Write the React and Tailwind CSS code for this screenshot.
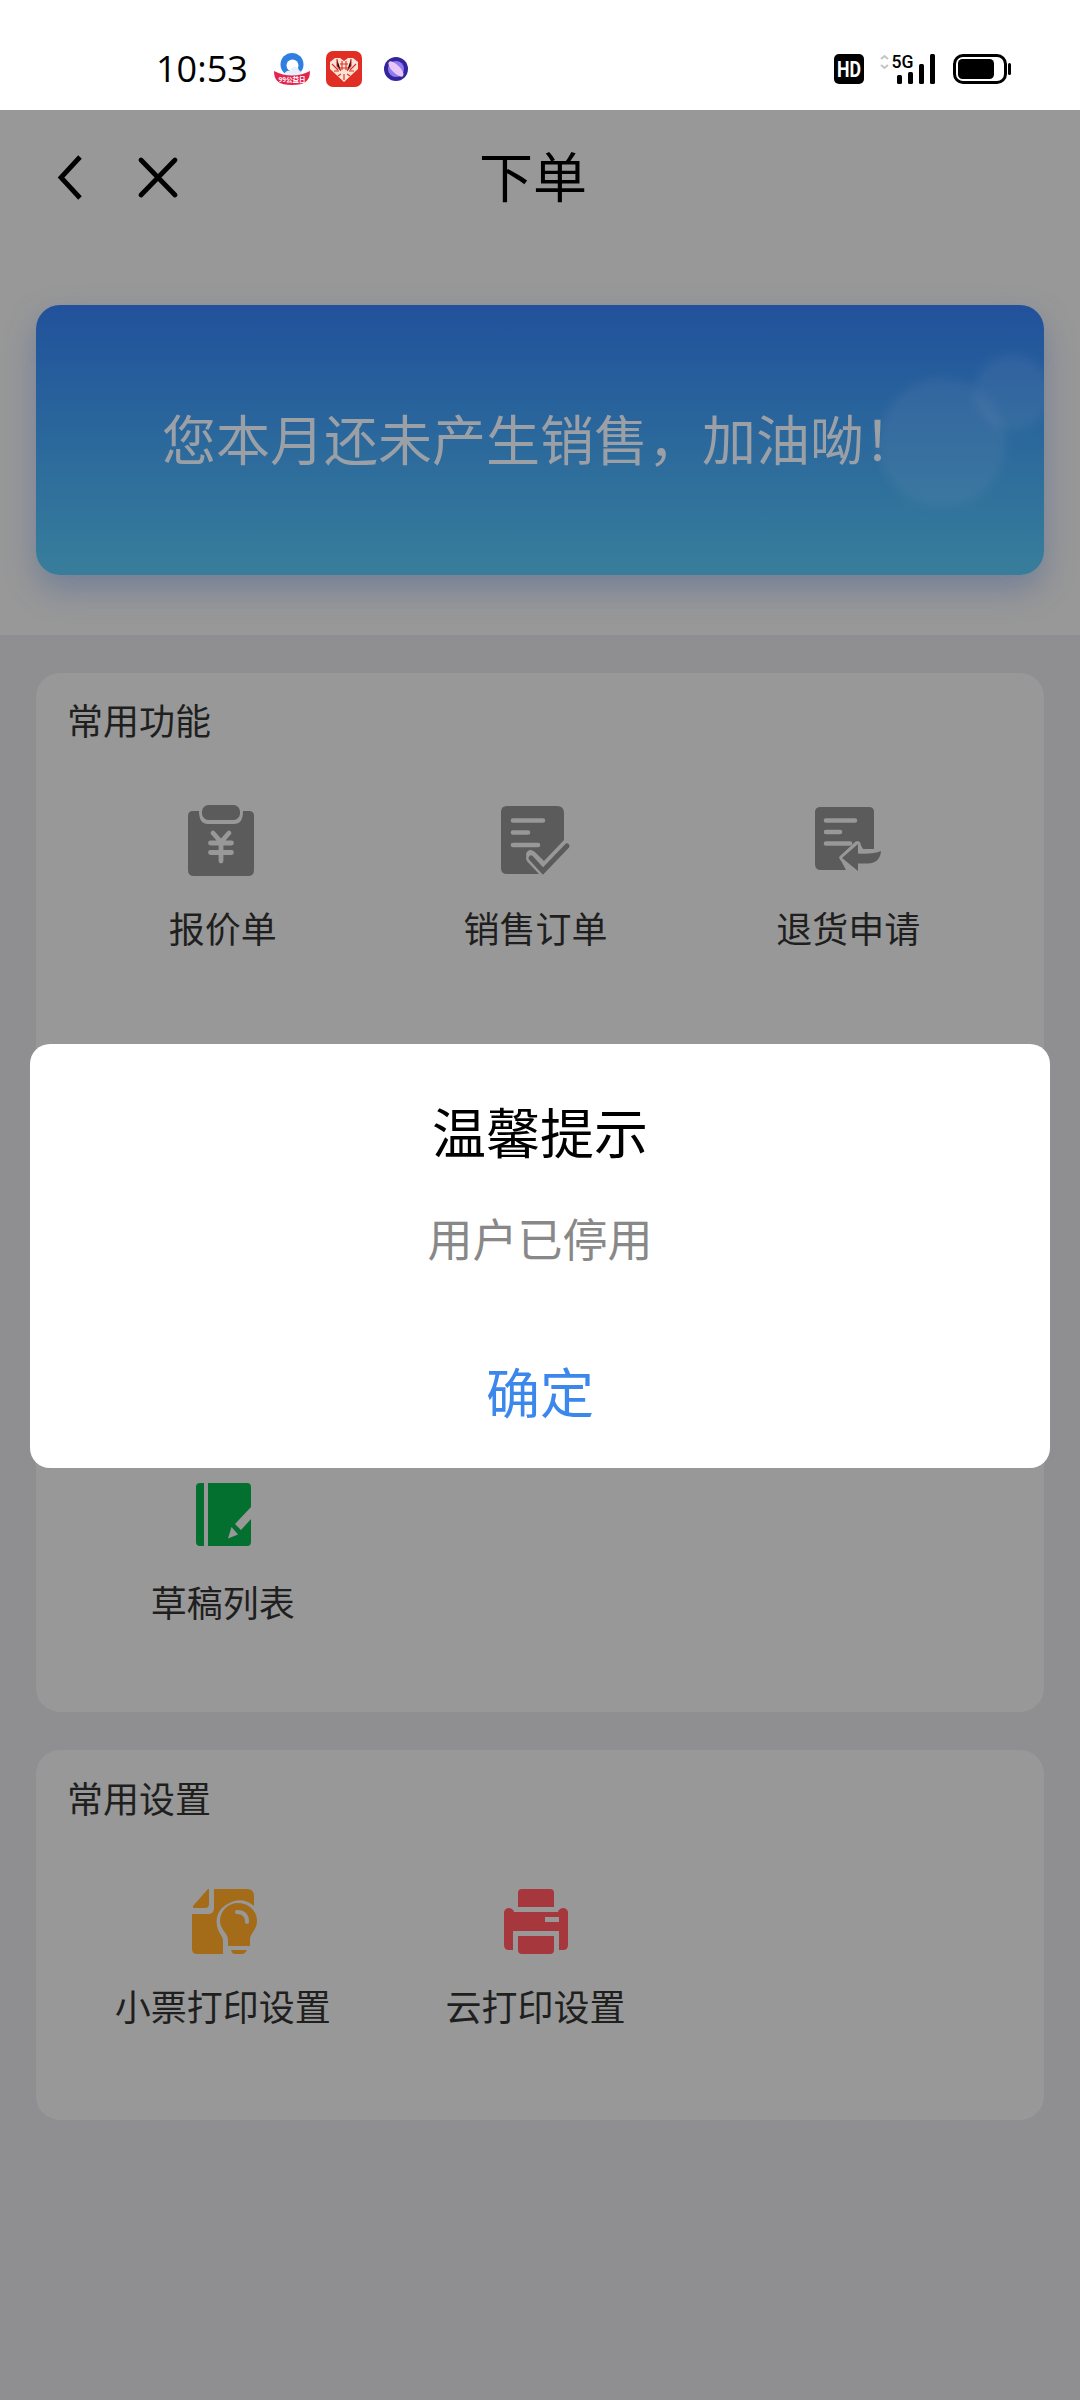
import React from "react";

const FONT = "font-['Roboto','Noto_Sans_CJK_SC',sans-serif]";

function StatusBar() {
    return (
        <div className="h-[110px] bg-white flex items-center pl-[156px] pr-[68px] pt-[27px]">
            <span className="w-[92px] text-[36px] leading-[50px] text-black font-['Open_Sans',sans-serif] whitespace-nowrap">10:53</span>

            {/* App notifications */}
            <svg className="w-9 h-8 ml-[26px]" viewBox="0 0 36 32">
                <circle cx="18" cy="11.5" r="11.5" fill="#2f7fe0" />
                <circle cx="18.500" cy="12.500" r="6" fill="#fff" />
                <path d="M10 24c-1-4 3-7 6-6 1-5 8-5 9-1l4 4-2 4z" fill="#e6f0fd" />
                <path d="M0 18q18 9 36 0c0 10-5 14-18 14S0 28 0 18z" fill="#e3264f" />
                <text x="18" y="29" textAnchor="middle" fontSize="6.500" fontWeight="700" fill="#fff">99公益日</text>
            </svg>
            <svg className="w-9 h-9 ml-4" viewBox="0 0 36 36">
                <rect width="36" height="36" rx="7" fill="#e02e24" />
                <path d="M18 31L4 18V11l5-4h5l4 3 4-3h5l5 4v7z" fill="#fbe3d6" />
                <path d="M6 13l6 6M11 8v7l4 5M30 13l-6 6M25 8v7l-4 5M8 20h5M23 20h5M18 23v6M14 13h8M14 17h8M16 10v9M20 10v9M15 23l-3 2M21 23l3 2" stroke="#e02e24" strokeWidth="1.100" />
            </svg>
            <svg className="w-6 h-6 ml-[22px]" viewBox="0 0 24 24">
                <circle cx="12" cy="12" r="12" fill="#33259b" />
                <circle cx="12" cy="12" r="8" fill="#8f7cf0" />
                <ellipse cx="12" cy="12" rx="10" ry="4" transform="rotate(45 12 12)" fill="#eac6f7" />
            </svg>

            {/* System indicators */}
            <svg className="w-[178px] h-[48px] ml-auto" viewBox="0 -8 178 48">
                <rect y="1" width="30" height="30" rx="5" fill="#000" />
                <text x="15" y="23.500" textAnchor="middle" textLength="24" lengthAdjust="spacingAndGlyphs" fontFamily="Roboto" fontSize="22" fontWeight="700" fill="#fff">HD</text>
                <path d="M47 6l3.500-3 3.500 3M47 12l3.500 3 3.500-3" fill="none" stroke="#c4c4c4" strokeWidth="2" />
                <text x="57.500" y="15" textLength="22" lengthAdjust="spacingAndGlyphs" fontFamily="Roboto" fontSize="19" fontWeight="500" fill="#000">5G</text>
                <rect x="63" y="22" width="5" height="9" rx="1.500" />
                <rect x="74" y="19" width="5" height="12" rx="1.500" />
                <rect x="85" y="11" width="5" height="20" rx="1.500" />
                <rect x="96" y="1" width="5" height="30" rx="1.500" />
                <rect x="120.500" y="2.500" width="51" height="27" rx="8.500" fill="none" stroke="#000" strokeWidth="3" />
                <rect x="124" y="6" width="36" height="20" rx="4.500" />
                <rect x="174" y="10" width="3" height="12" rx="1.500" />
            </svg>
        </div>
    );
}

function QuoteIcon() {
    return (
        <svg className="w-[72px] h-[72px]" viewBox="2 1 72 72">
            <path d="M8 7h6c0 9 3 13 9 13h26c6 0 9-4 9-13h6q5 0 5 5v54q0 6-6 6H9q-6 0-6-6V12q0-5 5-5z" fill="#5b5b5b" />
            <rect x="17" y="1" width="38" height="15" rx="6.500" fill="#5b5b5b" />
            <path d="M28 29l8 9 8-9M25.500 39h21M25.500 48.500h21M36 38v19" fill="none" stroke="#989898" strokeWidth="4.800" strokeLinecap="round" />
        </svg>
    );
}

function OrderIcon() {
    return (
        <svg className="w-[72px] h-[72px]" viewBox="0 1 72 72">
            <path d="M7 2h50q7 0 7 7v27L44 57l-7-7q-6-6-9-3-4 3 0 7l14 16H7q-6 0-6-6V8q0-6 6-6z" fill="#5b5b5b" />
            <path d="M13 16.500h30M13 28.500h15M13 41h25" stroke="#989898" strokeWidth="4.600" strokeLinecap="round" />
            <path d="M31 54l12 13 25-26" fill="none" stroke="#989898" strokeWidth="10" strokeLinecap="round" />
            <path d="M31 54l12 13 24-25" fill="none" stroke="#5b5b5b" strokeWidth="5" strokeLinecap="round" />
        </svg>
    );
}

function ReturnIcon() {
    return (
        <svg className="w-[72px] h-[72px]" viewBox="0 1 72 72">
            <path d="M8 3h48q5 0 5 5v37H50l-4-7q-3-2-5 1L26 53l7 13H8q-6 0-6-6V8q0-5 6-5z" fill="#5b5b5b" />
            <path d="M13 16.500h29M13 28h14M13 39.500h24" stroke="#989898" strokeWidth="4.600" strokeLinecap="round" />
            <path d="M29 54l16-14v9.500q15 1 23-2.500-1 12-13 12.500H45v7.500z" fill="#5b5b5b" stroke="#989898" strokeWidth="5" paintOrder="stroke" strokeLinejoin="round" />
        </svg>
    );
}

function DraftIcon() {
    return (
        <svg className="w-[72px] h-[72px]" viewBox="-1 0 72 72">
            <path d="M12 4h4v63h-4q-4 0-4-4V8q0-4 4-4zM20 4h39q4 0 4 4v20L47 45l6 6 10-11v23q0 4-4 4H20z" fill="#04702f" />
            <path d="M43.500 48l6.500 7.500-10 4z" fill="#989898" />
        </svg>
    );
}

function ReceiptIcon() {
    return (
        <svg className="w-[72px] h-[72px]" viewBox="-2 0 72 72">
            <path d="M20 6v15q0 4-4 4H4v-2L19 6z" fill="#a46c18" />
            <path d="M25 6h33q7 0 7 7v10q-9-8-20-5-20 7-17 25c2 9 6 9 6 15v13H8q-5 0-5-5V31h16q6 0 6-6z" fill="#a46c18" />
            <path d="M49 20c11 0 19 8 19 18 0 9-7 12-7 19v6H39v-6c0-7-8-10-8-19 0-10 8-18 18-18z" fill="#a46c18" />
            <path d="M42 67h16q-2 4-5 4H46q-3 0-4-4z" fill="#a46c18" />
            <path d="M48 29q10 0 10 10" fill="none" stroke="#989898" strokeWidth="4" strokeLinecap="round" />
        </svg>
    );
}

function PrinterIcon() {
    return (
        <svg className="w-[72px] h-[72px]" viewBox="0 0 72 72">
            <path d="M22 6h28q4 0 4 4v14H18V10q0-4 4-4z" fill="#a6373d" />
            <path d="M8 25q5 0 6 4h44q1-4 6-4 4 1 4 5v32q0 5-5 5h-4V48H13v19H9q-5 0-5-5V30q0-4 4-5z" fill="#a6373d" />
            <rect x="45" y="34" width="14" height="5" fill="#989898" />
            <path d="M18 53h36v14q0 4-4 4H22q-4 0-4-4z" fill="#a6373d" />
        </svg>
    );
}

function MenuItem({ icon, label }) {
    return (
        <div className="flex flex-col items-center">
            {icon}
            <span className="mt-[27px] mr-px text-[36px] leading-[54px] text-[#1f1f20] whitespace-nowrap">{label}</span>
        </div>
    );
}

export default function App() {
    return (
        <div className={`w-[1080px] h-[2400px] overflow-hidden bg-[#8f8f91] relative ${FONT}`}>
            <StatusBar />

            {/* Header and monthly sales */}
            <div className="h-[525px] bg-[#989898] px-9">
                <header className="h-[195px] flex items-start pt-[40px]">
                    <svg className="w-[130px] h-[60px] ml-[16px]" viewBox="0 0 130 60" fill="none" stroke="#000" strokeWidth="4.800">
                        <path d="M28 7L9 27.500 28 48" />
                        <path d="M89 10l34 35M123 10L89 45" strokeLinecap="round" />
                    </svg>
                    <h1 className="mt-[2px] ml-[297px] text-[54px] leading-[56px] text-black">下单</h1>
                </header>
                <section className="relative h-[270px] rounded-[24px] bg-gradient-to-b from-[#21519b] to-[#387e9b] shadow-[0_14px_32px_rgba(60,90,150,0.4)] flex items-center justify-center">
                    <svg className="absolute right-0 top-0 w-[220px] h-[270px] rounded-r-[24px]" viewBox="0 0 220 270">
                        <defs>
                            <filter id="soft">
                                <feGaussianBlur stdDeviation="5" />
                            </filter>
                        </defs>
                        <circle cx="118" cy="138" r="64" fill="#8fa0c0" fillOpacity="0.12" filter="url(#soft)" />
                        <circle cx="188" cy="88" r="38" fill="#8fa0c0" fillOpacity="0.11" filter="url(#soft)" />
                    </svg>
                    <p className="relative mt-[5px] text-[54px] leading-[72px] text-[#9b9fa6] whitespace-nowrap">您本月还未产生销售，加油呦！</p>
                </section>
            </div>

            {/* Common functions */}
            <section className="mx-9 mt-[38px] h-[1039px] rounded-[24px] bg-[#989899] px-[31px] pt-[23px]">
                <h2 className="text-[36px] leading-[54px] text-[#1f1f20]">常用功能</h2>
                <div className="mt-[55px] grid grid-cols-3 auto-rows-[337px] w-[938px]">
                    <MenuItem icon={<QuoteIcon />} label="报价单" />
                    <MenuItem icon={<OrderIcon />} label="销售订单" />
                    <MenuItem icon={<ReturnIcon />} label="退货申请" />
                    <div className="col-span-3" />
                    <MenuItem icon={<DraftIcon />} label="草稿列表" />
                </div>
            </section>

            {/* Common settings */}
            <section className="mx-9 mt-[38px] h-[370px] rounded-[24px] bg-[#989899] px-[31px] pt-[24px]">
                <h2 className="text-[36px] leading-[54px] text-[#1f1f20]">常用设置</h2>
                <div className="mt-[55px] grid grid-cols-3 w-[938px]">
                    <MenuItem icon={<ReceiptIcon />} label="小票打印设置" />
                    <MenuItem icon={<PrinterIcon />} label="云打印设置" />
                </div>
            </section>

            {/* Prompt dialog */}
            <div role="dialog" className="absolute left-[30px] top-[1044px] w-[1020px] h-[424px] rounded-[20px] bg-white flex flex-col items-center pt-[56px]">
                <h3 className="text-[54px] leading-[72px] text-black">温馨提示</h3>
                <p className="mt-[40px] text-[45px] leading-[60px] text-[#888888]">用户已停用</p>
                <button className="mt-[88px] text-[54px] leading-[72px] text-[#3c87ec]">确定</button>
            </div>
        </div>
    );
}
